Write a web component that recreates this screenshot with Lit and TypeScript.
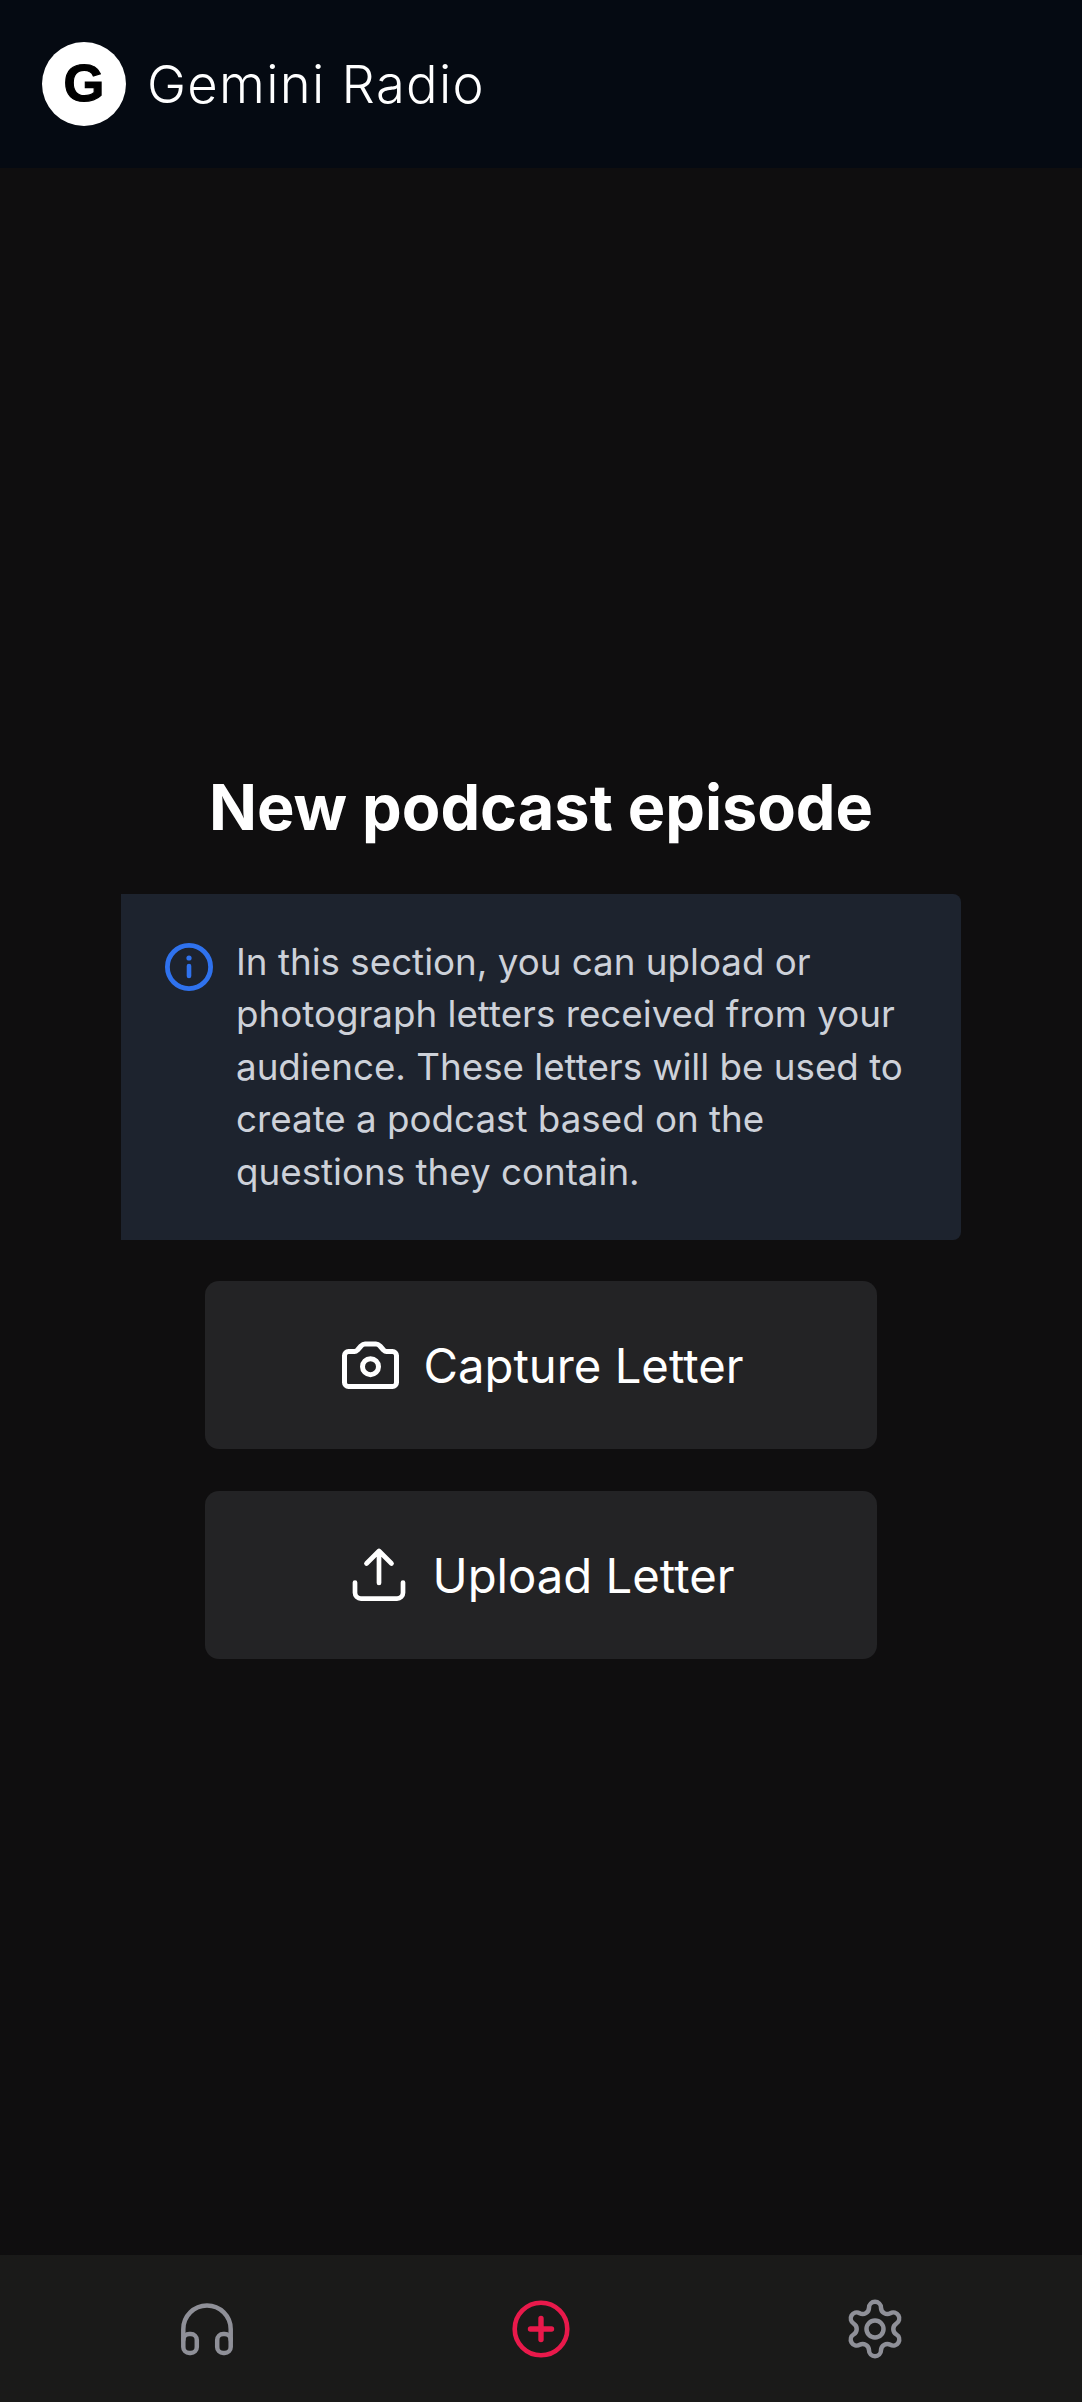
import { LitElement, html, css, svg } from "lit";
import { customElement } from "lit/decorators.js";

const gear = (() => {
  const R = 21, rl = 6, RV = 24.6, rv = 6.3, c = 35;
  const pol = (r: number, deg: number): [number, number] => {
    const a = (deg * Math.PI) / 180;
    return [c + r * Math.sin(a), c - r * Math.cos(a)];
  };
  const tangent = (a: [number, number], b: [number, number], ra: number, rb: number) => {
    const t = ra / (ra + rb);
    return `${(a[0] + (b[0] - a[0]) * t).toFixed(2)} ${(a[1] + (b[1] - a[1]) * t).toFixed(2)}`;
  };
  let d = "M" + tangent(pol(RV, -30), pol(R, 0), rv, rl);
  for (let k = 0; k < 6; k++) {
    const L = pol(R, 60 * k);
    const V = pol(RV, 60 * k + 30);
    const N = pol(R, 60 * k + 60);
    d += `A${rl} ${rl} 0 0 1 ${tangent(L, V, rl, rv)}`;
    d += `A${rv} ${rv} 0 0 0 ${tangent(V, N, rv, rl)}`;
  }
  return d + "Z";
})();

@customElement("app-root")
export class AppRoot extends LitElement {
  static styles = css`
    :host {
      display: flex;
      flex-direction: column;
      height: 2402px;
      background: #0f0e0f;
      font-family: Inter, "Noto Sans", sans-serif;
      color: #fff;
    }
    svg { display: block; flex: none; fill: none; stroke-linecap: round; stroke-linejoin: round; }
    .header {
      height: 168px;
      flex: none;
      box-sizing: border-box;
      background: #050a12;
      display: flex;
      align-items: center;
      padding-left: 42px;
      gap: 21px;
    }
    .logo {
      width: 84px;
      height: 84px;
      box-sizing: border-box;
      padding-bottom: 3px;
      border-radius: 50%;
      background: #fff;
      color: #000;
      display: flex;
      align-items: center;
      justify-content: center;
      font-family: "Liberation Sans", Arial, sans-serif;
      font-weight: 700;
      font-size: 52.5px;
      -webkit-text-stroke: 1.2px #000;
    }
    .brand { font-size: 52.5px; font-weight: 300; letter-spacing: 1.31px; }
    .main {
      flex: 1;
      display: flex;
      flex-direction: column;
      align-items: center;
      justify-content: center;
    }
    h1 {
      margin: 0 0 44px;
      font-size: 63px;
      line-height: 86px;
      font-weight: 700;
    }
    .info {
      width: 840px;
      box-sizing: border-box;
      background: #1d232e;
      border-radius: 0 8px 8px 0;
      padding: 42px 40px;
      display: flex;
      gap: 19px;
      margin-bottom: 41px;
    }
    .info svg { stroke: #2f72ee; margin-top: 3px; }
    .info p {
      margin: 0;
      font-size: 36.75px;
      line-height: 52.5px;
      color: #cdd1d9;
      flex: 1;
    }
    .btn {
      width: 672px;
      height: 168px;
      border-radius: 14px;
      background: #232325;
      display: flex;
      align-items: center;
      justify-content: center;
      gap: 15px;
      font-size: 47.25px;
      margin-bottom: 42px;
    }
    .btn:last-child { margin-bottom: 0; }
    .btn svg { stroke: #fff; }
    .nav {
      height: 147px;
      flex: none;
      box-sizing: border-box;
      background: #1a1a19;
      padding: 0 40px;
      display: grid;
      grid-template-columns: repeat(3, 1fr);
      align-items: center;
      justify-items: center;
    }
    .nav svg { stroke: #8f9098; }
    .nav svg.active { stroke: #e9194b; }
  `;

  render() {
    return html`
      <div class="header">
        <div class="logo">G</div>
        <div class="brand">Gemini Radio</div>
      </div>
      <div class="main">
        <h1>New podcast episode</h1>
        <div class="info">
          <svg width="56" height="56" viewBox="0 0 56 56">
            <circle cx="28" cy="28" r="21.6" stroke-width="4.8"></circle>
            <path d="M28 19h.01" stroke-width="5.2"></path>
            <path d="M28 27v10" stroke-width="4.6"></path>
          </svg>
          <p>In this section, you can upload or photograph letters received from your audience. These letters will be used to create a podcast based on the questions they contain.</p>
        </div>
        <div class="btn">
          <svg width="70" height="70" viewBox="3 0 70 70" stroke-width="5">
            <path d="M13.5 21.5H19.5Q21 21.5 22.5 20L26 16Q28 14 30 14H41Q43 14 45 16L48.5 20Q50 21.5 51.5 21.5H57.5a4 4 0 0 1 4 4V52.5a4 4 0 0 1-4 4H13.5a4 4 0 0 1-4-4V25.5a4 4 0 0 1 4-4Z"></path>
            <circle cx="35.5" cy="36.7" r="8"></circle>
          </svg>
          <span>Capture Letter</span>
        </div>
        <div class="btn">
          <svg width="70" height="70" viewBox="4 0 70 70" stroke-width="4.7">
            <path d="M35 11V43M22.5 23.5L35 11L47.5 23.5"></path>
            <path d="M11 42.5V52.7a6 6 0 0 0 6 6H53a6 6 0 0 0 6-6V42.5"></path>
          </svg>
          <span>Upload Letter</span>
        </div>
      </div>
      <div class="nav">
        <svg width="70" height="70" viewBox="0 0 70 70" stroke-width="4.5">
          <path d="M11.3 46V35.2a23.7 23.7 0 0 1 47.4 0V46"></path>
          <rect x="11.3" y="40" width="13.5" height="19" rx="6"></rect>
          <rect x="45.2" y="40" width="13.5" height="19" rx="6"></rect>
        </svg>
        <svg class="active" width="70" height="70" viewBox="0 0 70 70">
          <circle cx="35" cy="35" r="26.3" stroke-width="4.6"></circle>
          <path d="M35 24.5V45.5M24.5 35H45.5" stroke-width="5.4"></path>
        </svg>
        <svg width="70" height="70" viewBox="0 0 70 70" stroke-width="4.5">
          ${svg`<path d=${gear}></path>`}
          <circle cx="35" cy="35" r="8.5"></circle>
        </svg>
      </div>
    `;
  }
}
